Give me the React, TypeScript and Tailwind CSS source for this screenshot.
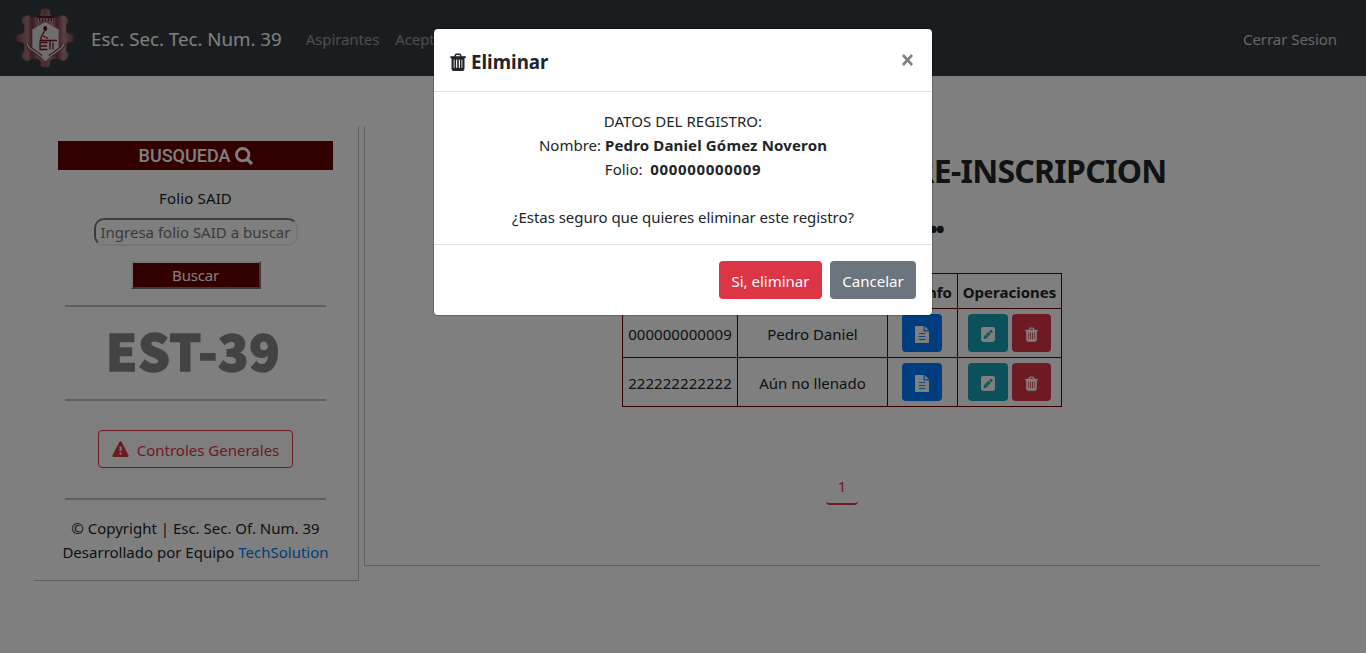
import React from 'react';

const TrashIcon = ({ className = '' }: { className?: string }) => (
  <svg viewBox="0 0 16 18" className={className} fill="none" stroke="currentColor">
    <path d="M4.900 3.800l.7-2c.1-.4.4-.6.8-.6h3.200c.4 0 .7.2.8.6l.7 2" strokeWidth="1.600" />
    <path d="M.3 4.200h15.400" strokeWidth="2" />
    <path d="M2.600 4.200v11c0 1 .6 1.700 1.500 1.700h7.800c.9 0 1.500-.7 1.500-1.700v-11" strokeWidth="2.200" />
    <path d="M3 5.500h10" strokeWidth="2.200" />
    <path d="M3 15.800h10" strokeWidth="2" />
    <path d="M5.300 6v10M8 6v10M10.700 6v10" strokeWidth="1.600" />
  </svg>
);

const FileIcon = () => (
  <svg viewBox="0 0 14 17" className="h-[17px] w-[14px]" fill="#fff">
    <path d="M1 0h7.600v5.400H14V16c0 .6-.4 1-1 1H1c-.6 0-1-.4-1-1V1c0-.6.4-1 1-1z" />
    <path d="M9.700.2 13.900 4.300H9.700z" />
    <path d="M4 7.500h6.400M4 10.500h6.400M4 13.500h6.400" stroke="#007bff" strokeWidth=".9" />
  </svg>
);

const EditIcon = () => (
  <svg viewBox="0 0 14 15" className="h-[15px] w-[14px]">
    <rect width="14" height="15" rx="2.400" fill="#fff" />
    <path d="M2.600 12l.5-2.700 4.700-4.700 2.100 2.100-4.700 4.700z" fill="#17a2b8" />
    <path d="M8.500 4l.9-.9c.3-.3.7-.3 1 0l1.100 1.100c.3.3.3.7 0 1l-.9.9z" fill="#17a2b8" />
    <path d="M4.500 9.800l3.600-3.600" stroke="#fff" strokeWidth=".5" />
  </svg>
);

const Logo = () => (
  <svg viewBox="0 0 60 60" className="h-[60px] w-[60px]">
    <defs>
      <linearGradient id="metal" x1="0" x2="1" y1="0" y2="0">
        <stop offset="0" stopColor="#704244" />
        <stop offset=".2" stopColor="#a87a7c" />
        <stop offset=".28" stopColor="#78393d" />
        <stop offset=".38" stopColor="#a4777a" />
        <stop offset=".5" stopColor="#8a5558" />
        <stop offset=".62" stopColor="#b08588" />
        <stop offset=".7" stopColor="#78393d" />
        <stop offset=".82" stopColor="#b18487" />
        <stop offset="1" stopColor="#704244" />
      </linearGradient>
    </defs>
    <path
      d="M26 1.500Q30-.5 34.500 1.500L35.500 7.500 38 9H44L46 7.500Q49 6.500 51.500 9T53 14.500L51.500 17V24L53.500 25.500 58 26.500Q60.500 30 58 33.500L53.500 34.500 51.500 36V43L53.500 45.500Q54 49 51.500 51.500T46 52.500L44 51H38L35.500 52.500 34.500 58.500Q30 60.500 26 58.500L25 52.500 22.500 51H16.500L14.500 52.500Q11 54 8.500 51.500T7 45.500L9 43V36L7 34.500 2 33.500Q-.5 30 2 26.500L7 25.500 9 24V17L7 14.500Q6 11.500 8.500 9T14.500 7.500L16.500 9H22.500L25 7.500z"
      fill="url(#metal)"
      stroke="#623a3c"
      strokeWidth=".6"
    />
    <path d="M22 10.500h17" stroke="#5c1b20" strokeWidth="5" />
    <path d="M22.500 11.500h16" stroke="#c9aeb0" strokeWidth="3" strokeDasharray="1.400 1.500" />
    <path d="M30.300 14l13.400 7.500v18L30.300 53.500 17.300 39.500v-18z" fill="#dedada" />
    <path d="M12 35.500l2 4 12.500 9M49 35.500l-2 4-12.500 9" stroke="#7a4346" strokeWidth="3.600" fill="none" />
    <path d="M12 35.500l2 4 13 9.500M49 35.500l-2 4-13 9.500" stroke="#dcd0d0" strokeWidth="1.500" fill="none" />
    <ellipse cx="30.300" cy="20.500" rx="1.900" ry="2.500" fill="#5a0e14" />
    <g stroke="#7b1119" strokeWidth="1.300" fill="none">
      <path d="M29.500 23l-3.500 6.500V32M28 28l5 2.500" />
      <path d="M42 32.500H24.500M32.500 34.500H25v7h7.500M25 38h7M35 32.500v9M38 34.500v7" />
    </g>
  </svg>
);

const iconBtn = 'flex h-[38px] items-center justify-center rounded text-white';
const cell = 'border border-[#660000]';

const Row = ({ folio, name }: { folio: string; name: string }) => (
  <tr className="h-[49px]">
    <td className={`${cell} pl-px pt-0.5 tracking-[0.05px]`}>{folio}</td>
    <td className={`${cell} pl-px pt-0.5`}>{name}</td>
    <td className={cell}>
      <button className={`${iconBtn} mx-auto w-10 bg-[#007bff] pt-0.5`}><FileIcon /></button>
    </td>
    <td className={cell}>
      <div className="flex justify-center gap-1">
        <button className={`${iconBtn} w-10 bg-[#17a2b8] pt-[3px]`}><EditIcon /></button>
        <button className={`${iconBtn} w-[39px] bg-[#dc3545] pt-0.5`}><TrashIcon className="h-[15px] w-[13px]" /></button>
      </div>
    </td>
  </tr>
);

const Navbar = () => (
  <nav className="flex h-[76px] items-center bg-[#343a40] pb-px pl-[15px] pr-[29px]">
    <Logo />
    <span className="ml-4 mt-1 whitespace-nowrap text-[18.700px] text-white">Esc. Sec. Tec. Num. 39</span>
    <span className="ml-6 mt-1 tracking-[-0.1px] text-white/50">Aspirantes</span>
    <span className="ml-4 mt-1 tracking-[-0.1px] text-white/50">Aceptados</span>
    <span className="ml-auto mt-1 tracking-[-0.05px] text-white/75">Cerrar Sesion</span>
  </nav>
);

const Sidebar = () => (
  <aside className="flex h-[455px] w-[325px] flex-col items-center border-b border-r border-[#bfbfbf] pr-px pt-[15px] text-center">
    <h2 className="flex h-[29px] w-[275px] items-center justify-center gap-[5px] bg-[#660000] pl-px font-[Roboto] text-[18px] font-medium text-white">
      BUSQUEDA
      <svg viewBox="0 0 18 18" className="h-[18px] w-[18px]" fill="none" stroke="#fff">
        <circle cx="7.700" cy="7.700" r="6.200" strokeWidth="2.800" />
        <path d="M12 12l5 5" strokeWidth="3.200" />
      </svg>
    </h2>
    <label className="mt-4 leading-6 tracking-[0.15px]">Folio SAID</label>
    <input
      className="mt-2 h-7 w-[204px] rounded-[10px] border-2 border-b-[#ebebeb] border-l-[#767676] border-r-[#ebebeb] border-t-[#767676] px-[5px] placeholder-[#757575]"
      placeholder="Ingresa folio SAID a buscar"
    />
    <button className="mt-[15px] h-7 w-[130px] border-2 border-b-[#767676] border-l-[#efefef] border-r-[#767676] border-t-[#efefef] bg-[#660000] tracking-[-0.2px] text-white">
      Buscar
    </button>
    <div className="mt-4 h-[2px] w-[261px] bg-[#bfbfbf]" />
    <div className="flex h-[92px] items-center pb-[8px] pr-[5px] font-['Noto_Sans_CJK_SC',sans-serif] text-[50px] font-black tracking-[0.6px] text-[#878787] [-webkit-text-stroke:1.500px_#878787]">
      EST-39
    </div>
    <div className="h-[2px] w-[261px] bg-[#bfbfbf]" />
    <div className="mt-4 flex h-16 w-[259px] items-center justify-center bg-[#fdfdfd]">
      <button className="flex h-[38px] w-[195px] items-center justify-center gap-2 rounded border border-[#dc3545] text-[#dc3545]">
        <svg viewBox="0 0 17 16" className="h-4 w-[17px]">
          <path d="M7.500.8c.4-.8 1.600-.8 2 0l7 13.500c.4.800-.1 1.700-1 1.700h-14c-.9 0-1.400-.9-1-1.700z" fill="#dc3545" />
          <path d="M8.500 5.500v4.500M8.500 11.500v2" stroke="#fff" strokeWidth="1.900" />
        </svg>
        <span className="pt-0.5">Controles Generales</span>
      </button>
    </div>
    <div className="mt-[17px] h-[2px] w-[261px] bg-[#bfbfbf]" />
    <p className="mt-4 whitespace-nowrap leading-6">
      © Copyright | Esc. Sec. Of. Num. 39
      <br />
      Desarrollado por Equipo <a className="text-[#007bff]">TechSolution</a>
    </p>
  </aside>
);

const MainPanel = () => (
  <main className="ml-[5px] flex h-[440px] w-[956px] flex-col items-center border-b border-l border-[#bfbfbf] text-center">
    <h1 className="mt-[23px] w-[648px] text-right text-[32px] font-bold leading-[44px] tracking-[-0.750px]">PRE-INSCRIPCION</h1>
    <div className="mt-[14px] w-[200px] text-right text-[24px] font-bold leading-[44px] tracking-[-2.200px]">••••</div>
    <table className="mr-0.5 mt-[22px] w-[440px] table-fixed border-collapse">
      <colgroup>
        <col className="w-[115px]" />
        <col className="w-[150px]" />
        <col className="w-[70px]" />
        <col className="w-[104px]" />
      </colgroup>
      <thead>
        <tr className="h-[35px]">
          <th className={`${cell} pt-0.5`}>Folio</th>
          <th className={cell} aria-label="Nombre" />
          <th className={`${cell} whitespace-nowrap pt-0.5`}>Ver Info</th>
          <th className={`${cell} pl-px pt-0.5`}>Operaciones</th>
        </tr>
      </thead>
      <tbody>
        <Row folio="000000000009" name="Pedro Daniel" />
        <Row folio="222222222222" name="Aún no llenado" />
      </tbody>
    </table>
    <div className="mr-px mt-[62px] flex h-9 w-8 items-center justify-center rounded border-b-2 border-[#dc3545] text-[#dc3545]">1</div>
  </main>
);

const Modal = () => (
  <div className="absolute inset-0 flex items-start justify-center bg-black/50 pt-[29px]">
    <div className="flex h-[286px] w-[498px] flex-col rounded bg-white shadow-[0_0_0_1px_rgba(0,0,0,0.2)]">
      <header className="flex h-[63px] items-center border-b border-[#dee2e6] px-4">
        <TrashIcon className="mt-[3px] h-[18px] w-4" />
        <h2 className="ml-[5px] mt-1 text-[18.800px] font-bold">Eliminar</h2>
        <svg viewBox="0 0 12 12" className="ml-auto mr-[3px] h-3 w-[11px]" preserveAspectRatio="none" stroke="#7f7f7f" strokeWidth="2.800">
          <path d="M1 1l10 10M11 1L1 11" />
        </svg>
      </header>
      <div className="h-[152px] pt-[17px] text-center leading-6">
        <p className="tracking-[0.05px]">DATOS DEL REGISTRO:</p>
        <p>Nombre: <b className="tracking-[0.150px]">Pedro Daniel Gómez Noveron</b></p>
        <p>Folio:&nbsp; <b className="tracking-[0.650px]">000000000009</b></p>
        <p className="mt-6 tracking-[-0.04px]">¿Estas seguro que quieres eliminar este registro?</p>
      </div>
      <footer className="flex grow items-center justify-end gap-2 border-t border-[#dee2e6] px-4 text-white">
        <button className="h-[38px] w-[103px] rounded bg-[#dc3545] pt-0.5">Si, eliminar</button>
        <button className="h-[38px] w-[86px] rounded bg-[#6c757d] pt-0.5">Cancelar</button>
      </footer>
    </div>
  </div>
);

export default function App() {
  return (
    <div className="relative h-[653px] w-[1366px] overflow-hidden bg-white font-['Noto_Sans',sans-serif] text-[15px] text-[#212529]">
      <Navbar />
      <div className="flex pl-[34px] pt-[50px]">
        <Sidebar />
        <MainPanel />
      </div>
      <Modal />
    </div>
  );
}
